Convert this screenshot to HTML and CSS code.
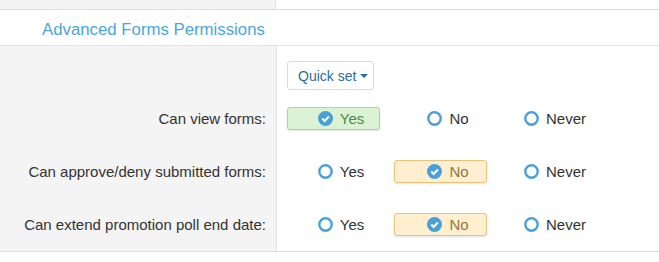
FILE: index.html
```html
<!DOCTYPE html>
<html>
<head>
<meta charset="utf-8">
<link rel="stylesheet" href="styles.css">
</head>
<body>
<div class="prev-row">
  <div class="label-cell"></div>
  <div class="control-cell"></div>
</div>
<h3 class="section-title">Advanced Forms Permissions</h3>
<div class="perm-body">
  <div class="row row-first">
    <div class="label-cell"></div>
    <div class="control-cell">
      <button class="quick-set">Quick set <span class="caret"></span></button>
    </div>
  </div>
  <div class="row">
    <div class="label-cell"><span class="label">Can view forms:</span></div>
    <div class="control-cell options">
      <div class="opt checked yes"><svg class="ico" viewBox="0 0 15 15"><circle cx="7.5" cy="7.5" r="7.5" fill="#4a9fd9"/><path d="M4.2 7.6 L6.6 9.9 L10.9 5.4" fill="none" stroke="#fff" stroke-width="2.1"/></svg><span>Yes</span></div>
      <div class="opt"><svg class="ico" viewBox="0 0 15 15"><circle cx="7.5" cy="7.5" r="6.2" fill="#fff" stroke="#4a9fd9" stroke-width="2.4"/></svg><span>No</span></div>
      <div class="opt"><svg class="ico" viewBox="0 0 15 15"><circle cx="7.5" cy="7.5" r="6.2" fill="#fff" stroke="#4a9fd9" stroke-width="2.4"/></svg><span>Never</span></div>
    </div>
  </div>
  <div class="row">
    <div class="label-cell"><span class="label">Can approve/deny submitted forms:</span></div>
    <div class="control-cell options">
      <div class="opt"><svg class="ico" viewBox="0 0 15 15"><circle cx="7.5" cy="7.5" r="6.2" fill="#fff" stroke="#4a9fd9" stroke-width="2.4"/></svg><span>Yes</span></div>
      <div class="opt checked no"><svg class="ico" viewBox="0 0 15 15"><circle cx="7.5" cy="7.5" r="7.5" fill="#4a9fd9"/><path d="M4.2 7.6 L6.6 9.9 L10.9 5.4" fill="none" stroke="#fff" stroke-width="2.1"/></svg><span>No</span></div>
      <div class="opt"><svg class="ico" viewBox="0 0 15 15"><circle cx="7.5" cy="7.5" r="6.2" fill="#fff" stroke="#4a9fd9" stroke-width="2.4"/></svg><span>Never</span></div>
    </div>
  </div>
  <div class="row row-last">
    <div class="label-cell"><span class="label">Can extend promotion poll end date:</span></div>
    <div class="control-cell options">
      <div class="opt"><svg class="ico" viewBox="0 0 15 15"><circle cx="7.5" cy="7.5" r="6.2" fill="#fff" stroke="#4a9fd9" stroke-width="2.4"/></svg><span>Yes</span></div>
      <div class="opt checked no"><svg class="ico" viewBox="0 0 15 15"><circle cx="7.5" cy="7.5" r="7.5" fill="#4a9fd9"/><path d="M4.2 7.6 L6.6 9.9 L10.9 5.4" fill="none" stroke="#fff" stroke-width="2.1"/></svg><span>No</span></div>
      <div class="opt"><svg class="ico" viewBox="0 0 15 15"><circle cx="7.5" cy="7.5" r="6.2" fill="#fff" stroke="#4a9fd9" stroke-width="2.4"/></svg><span>Never</span></div>
    </div>
  </div>
</div>
</body>
</html>
```

FILE: styles.css
```css
html, body {
  margin: 0;
  padding: 0;
  background: #fff;
  font-family: "Liberation Sans", Arial, sans-serif;
  color: #333;
}

.prev-row {
  display: grid;
  grid-template-columns: 276px 1fr;
  height: 9px;
  border-bottom: 1px solid #dedede;
}

.label-cell {
  background: #f4f4f4;
  border-right: 1px solid #e2e2e2;
}

.control-cell {
  background: #fff;
}

.section-title {
  margin: 0;
  height: 36px;
  box-sizing: border-box;
  padding: 10px 0 0 42px;
  font-size: 16.8px;
  font-weight: normal;
  line-height: 20px;
  color: #4ba6da;
  border-bottom: 1px solid #e2e2e2;
}

.perm-body {
  border-bottom: 1px solid #dcdcdc;
}

.row {
  display: grid;
  grid-template-columns: 277px 1fr;
}

.row .label-cell,
.row .control-cell {
  padding-bottom: 30px;
}

.row-first .label-cell,
.row-first .control-cell {
  padding-top: 15px;
  padding-bottom: 17px;
}

.row-last .label-cell,
.row-last .control-cell {
  padding-bottom: 15px;
}

.label-cell {
  text-align: right;
  padding-right: 10px;
}

.label {
  display: block;
  font-size: 15px;
  line-height: 23px;
  color: #333;
}

.control-cell {
  padding-left: 10px;
}

.quick-set {
  display: flex;
  align-items: center;
  height: 29px;
  width: 87px;
  box-sizing: border-box;
  padding: 0 0 0 10px;
  border: 1px solid #dadada;
  border-radius: 3px;
  background: #fff;
  font-family: "Liberation Sans", Arial, sans-serif;
  font-size: 14px;
  color: #2f6b9a;
}

.caret {
  display: inline-block;
  margin-left: 4px;
  width: 0;
  height: 0;
  border-left: 4px solid transparent;
  border-right: 4px solid transparent;
  border-top: 4px solid #2f6b9a;
}

.options {
  display: flex;
  gap: 14px;
}

.opt {
  width: 93px;
  height: 23px;
  box-sizing: border-box;
  border: 1px solid transparent;
  border-radius: 3px;
  display: flex;
  align-items: center;
  justify-content: center;
  padding-left: 15px;
  font-size: 15px;
  color: #333;
}

.opt .ico {
  width: 15px;
  height: 15px;
  margin-right: 7px;
  flex: none;
}

.opt.yes {
  background: #dcf2d4;
  border-color: #a6d897;
  color: #4d8a42;
  box-shadow: 0 1px 2px rgba(0, 0, 0, 0.12);
}

.opt.no {
  background: #fdefd0;
  border-color: #e8c47a;
  color: #94763e;
  box-shadow: 0 1px 2px rgba(0, 0, 0, 0.12);
}
```
